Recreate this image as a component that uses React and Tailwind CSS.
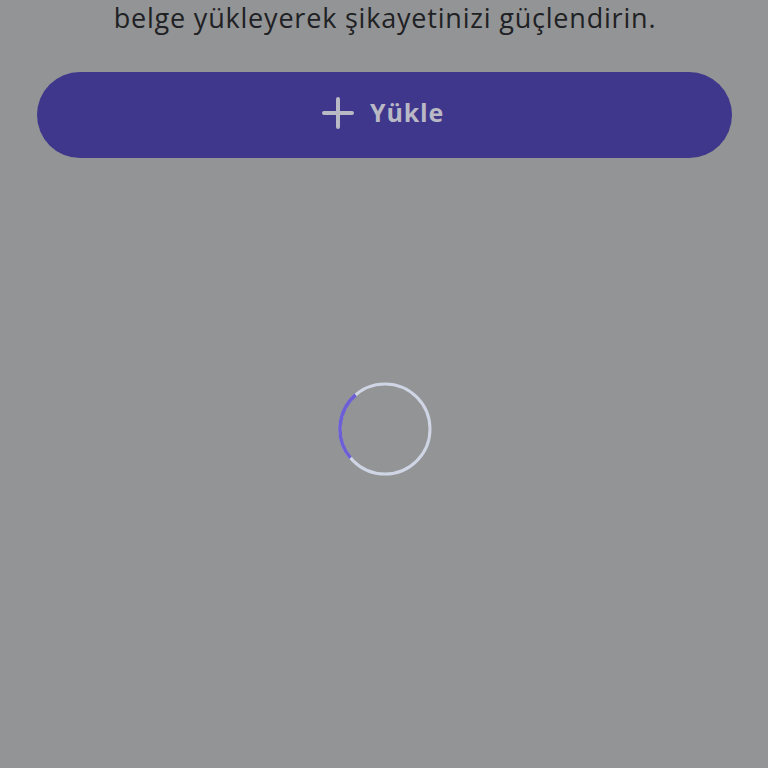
import React from 'react';
import { Plus } from 'lucide-react';

const Spinner = () => (
  <svg width="96" height="96" viewBox="0 0 96 96">
    <circle cx="48" cy="48" r="45" fill="none" stroke="#cfd5e4" strokeWidth="3" />
    {/* active arc on the left side */}
    <circle
      cx="48"
      cy="48"
      r="45"
      fill="none"
      stroke="#6c5fd6"
      strokeWidth="3.5"
      strokeDasharray="70 300"
      transform="rotate(140 48 48)"
    />
  </svg>
);

export default function App() {
  return (
    <div className="w-[768px] h-[768px] bg-[#939495] overflow-hidden flex flex-col items-center" style={{ fontFamily: '"Open Sans", "Liberation Sans", sans-serif' }}>
      <p className="text-[27px] leading-[36px] text-[#202124] tracking-[0.8px] pl-[2px]">
        belge yükleyerek şikayetinizi güçlendirin.
      </p>
      <button className="mt-[36px] w-[695px] h-[86px] rounded-full bg-[#3f378b] flex items-center justify-center gap-[8px] pr-[10px] pb-[4px] text-[#b9b9c6]">
        <Plus size={48} strokeWidth={2} />
        <span className="text-[25px] font-bold tracking-[0.8px]">Yükle</span>
      </button>
      <div className="mt-[223px] pl-[2px]">
        <Spinner />
      </div>
    </div>
  );
}
